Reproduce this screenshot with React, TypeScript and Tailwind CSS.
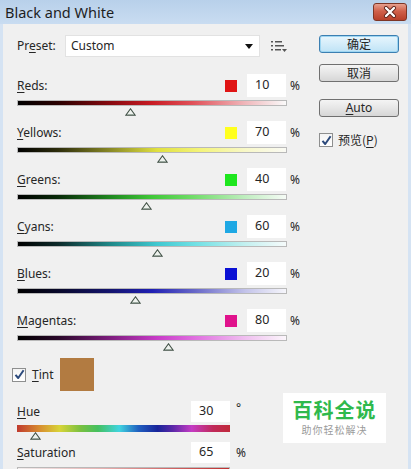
import React from "react";

type Row = {
  u: string;
  rest: string;
  swatch: string;
  value: number;
  grad: string;
};

const rows: Row[] = [
  {
    u: "R",
    rest: "eds:",
    swatch: "bg-[#e01414]",
    value: 10,
    grad: "bg-[linear-gradient(to_right,#000_0%,#2a0000_15%,#8a0a10_35%,#c81c24_50%,#e05058_65%,#f0b8bc_85%,#fafafa_100%)]",
  },
  {
    u: "Y",
    rest: "ellows:",
    swatch: "bg-[#ffff1e]",
    value: 70,
    grad: "bg-[linear-gradient(to_right,#000_0%,#2e2e0c_15%,#8c8c28_35%,#e0e040_52%,#f4f47a_68%,#f8f8c8_85%,#fafaf4_100%)]",
  },
  {
    u: "G",
    rest: "reens:",
    swatch: "bg-[#1ee61e]",
    value: 40,
    grad: "bg-[linear-gradient(to_right,#000_0%,#082a08_15%,#208a20_35%,#40c838_50%,#70dc68_65%,#c0eec0_85%,#f6fbf6_100%)]",
  },
  {
    u: "C",
    rest: "yans:",
    swatch: "bg-[#1ea8e4]",
    value: 60,
    grad: "bg-[linear-gradient(to_right,#000_0%,#0c2a2a_15%,#208a8a_35%,#40c8d0_52%,#70e0e4_66%,#c4f0f0_85%,#f6fbfb_100%)]",
  },
  {
    u: "B",
    rest: "lues:",
    swatch: "bg-[#0a10d4]",
    value: 20,
    grad: "bg-[linear-gradient(to_right,#000_0%,#08082a_15%,#141470_35%,#2020b4_50%,#6868c8_66%,#c4c4ea_85%,#f6f6fb_100%)]",
  },
  {
    u: "M",
    rest: "agentas:",
    swatch: "bg-[#e0128c]",
    value: 80,
    grad: "bg-[linear-gradient(to_right,#000_0%,#2a082a_15%,#801e80_35%,#c83cc8_52%,#e070e0_66%,#f0c0f0_85%,#fbf6fb_100%)]",
  },
];

function Thumb({ left }: { left: number }) {
  return (
    <svg
      width="11"
      height="8"
      viewBox="0 0 11 8"
      className="absolute top-[7px]"
      style={{ left }}
    >
      <polygon points="5.5,0.8 10.2,7.3 0.8,7.3" fill="#eef2ee" stroke="#3f4f44" strokeWidth="1.1" />
      <line x1="2" y1="6.5" x2="9" y2="6.5" stroke="#9aa89e" strokeWidth="1" />
    </svg>
  );
}

function Check() {
  return (
    <div className="w-[14px] h-[14px] border border-[#8e8f8f] bg-[linear-gradient(#f4f4f4,#ffffff)] flex items-center justify-center">
      <svg width="11" height="11" viewBox="0 0 11 11">
        <path d="M1.5 5.8 L4.2 9 L9.6 1.2" fill="none" stroke="#2c4a7c" strokeWidth="2" strokeLinejoin="round" />
      </svg>
    </div>
  );
}

export default function App() {
  return (
    <div className="w-[411px] h-[469px] overflow-hidden flex flex-col bg-[#d5e3f3] font-['Noto_Sans','Noto_Sans_CJK_SC',sans-serif] text-[#262626]">
      {/* title bar */}
      <div className="h-[24px] shrink-0 flex items-center justify-between pl-[5px] pr-[4px] bg-[linear-gradient(#b8d0ea,#c9dcf1)]">
        <span className="text-[14.5px] leading-none text-[#1e1e1e]">Black and White</span>
        <div className="w-[34px] h-[18px] rounded-[3px] border border-[#7d3626] bg-[linear-gradient(#e7a08e,#d0604a_45%,#b8402a)] flex items-center justify-center">
          <svg width="14" height="12" viewBox="0 0 14 12">
            <path d="M3 2 L11 10 M11 2 L3 10" stroke="#5a2018" strokeWidth="4" strokeLinecap="round" />
            <path d="M3 2 L11 10 M11 2 L3 10" stroke="#ffffff" strokeWidth="2.4" strokeLinecap="round" />
          </svg>
        </div>
      </div>

      {/* body */}
      <div className="flex-1 mx-[3px] bg-[#f0f0f0] relative flex pt-[11px] pl-[14px] text-[12px]">
        {/* left column */}
        <div className="w-[284px] flex flex-col">
          {/* preset */}
          <div className="h-[22px] flex items-center">
            <span className="w-[48px]">
              Pr<span className="underline underline-offset-2">e</span>set:
            </span>
            <div className="w-[195px] h-[22px] bg-white border border-[#e2e2e2] flex items-center justify-between pl-[5px] pr-[6px]">
              <span>Custom</span>
              <svg width="8" height="5" viewBox="0 0 8 5">
                <polygon points="0,0 8,0 4,5" fill="#111" />
              </svg>
            </div>
            <svg width="16" height="12" viewBox="0 0 16 12" className="ml-[11px]">
              <rect x="0" y="1" width="2" height="1.5" fill="#555" />
              <rect x="0" y="5" width="2" height="1.5" fill="#555" />
              <rect x="0" y="9" width="2" height="1.5" fill="#555" />
              <rect x="4" y="1" width="7" height="1.5" fill="#555" />
              <rect x="4" y="5" width="9" height="1.5" fill="#555" />
              <rect x="4" y="9" width="6" height="1.5" fill="#555" />
              <polygon points="11,9 16,9 13.5,12" fill="#555" />
            </svg>
          </div>

          {/* color rows */}
          <div className="mt-[17px] flex flex-col">
            {rows.map((r) => (
              <div key={r.u} className="h-[47px] flex flex-col">
                <div className="h-[23px] flex items-center">
                  <span className="flex-1">
                    <span className="underline underline-offset-2">{r.u}</span>
                    {r.rest}
                  </span>
                  <div className={`w-[12px] h-[12px] ${r.swatch}`} />
                  <div className="ml-[10px] w-[39px] h-[23px] bg-white flex items-center pl-[8px] text-[12.5px]">{r.value}</div>
                  <span className="ml-[4px] w-[11px]">%</span>
                </div>
                <div className={`relative mt-[3px] w-[270px] h-[6px] border border-[#b9b9b9] ${r.grad}`}>
                  <Thumb left={((r.value + 200) / 500) * 270 - 6.5} />
                </div>
              </div>
            ))}
          </div>

          {/* tint */}
          <div className="mt-[2px] flex items-center -ml-[5px]">
            <Check />
            <span className="ml-[6px]">
              <span className="underline underline-offset-2">T</span>int
            </span>
            <div className="ml-[6px] w-[34px] h-[33px] bg-[#b27b41]" />
          </div>

          {/* hue */}
          <div className="mt-[10px] flex flex-col">
            <div className="h-[21px] flex items-center">
              <span className="w-[174px]">
                <span className="underline underline-offset-2">H</span>ue
              </span>
              <div className="w-[39px] h-[21px] bg-white flex items-center pl-[8px] text-[12.5px]">30</div>
              <span className="ml-[6px] text-[12px] -mt-[8px]">°</span>
            </div>
            <div className="relative mt-[3px] w-[213px] h-[7px] bg-[linear-gradient(to_right,#c03a2e_0%,#d89030_11%,#d8d438_20%,#78c040_30%,#44c060_38%,#40d4e0_48%,#2060c0_57%,#18249a_66%,#5a28a8_73%,#c43cc4_82%,#c02a5a_92%,#c02a3a_100%)]">
              <Thumb left={13} />
            </div>
            <div className="mt-[10px] h-[21px] flex items-center">
              <span className="w-[174px]">
                <span className="underline underline-offset-2">S</span>aturation
              </span>
              <div className="w-[39px] h-[21px] bg-white flex items-center pl-[8px] text-[12.5px]">65</div>
              <span className="ml-[6px]">%</span>
            </div>
            <div className="relative mt-[4px] w-[213px] h-[7px] border border-[#b9b9b9] bg-[linear-gradient(to_right,#f2eeee_0%,#e8b0b0_40%,#d06060_75%,#c03030_100%)]" />
          </div>
        </div>

        {/* right column */}
        <div className="ml-[18px] w-[80px] flex flex-col text-[12px] font-['Noto_Sans_CJK_SC','Noto_Sans',sans-serif]">
          <button className="h-[18px] rounded-[3px] border border-[#3c7fb1] bg-[linear-gradient(#e8f6fd,#bfe3f6)] shadow-[inset_0_0_0_1px_#9ed6f2] flex items-center justify-center leading-none">
            确定
          </button>
          <button className="mt-[11px] h-[18px] rounded-[3px] border border-[#707070] bg-[linear-gradient(#f4f4f4,#e6e6e6_50%,#d6d6d6)] flex items-center justify-center leading-none">
            取消
          </button>
          <button className="mt-[17px] h-[18px] rounded-[3px] border border-[#707070] bg-[linear-gradient(#f4f4f4,#e6e6e6_50%,#d6d6d6)] flex items-center justify-center leading-none font-['Noto_Sans',sans-serif]">
            <span className="underline underline-offset-2">A</span>uto
          </button>
          <div className="mt-[14px] flex items-center">
            <Check />
            <span className="ml-[5px]">
              预览(<span className="underline underline-offset-2">P</span>)
            </span>
          </div>
        </div>

        {/* watermark */}
        <div className="absolute left-[280px] top-[369px] w-[103px] h-[50px] bg-white flex flex-col items-center justify-center">
          <span className="text-[20px] leading-none font-bold text-[#2fb94c] tracking-[1px]">百科全说</span>
          <span className="mt-[4px] text-[10px] leading-none text-[#9a9a9a] tracking-[1px]">助你轻松解决</span>
        </div>
      </div>
    </div>
  );
}
